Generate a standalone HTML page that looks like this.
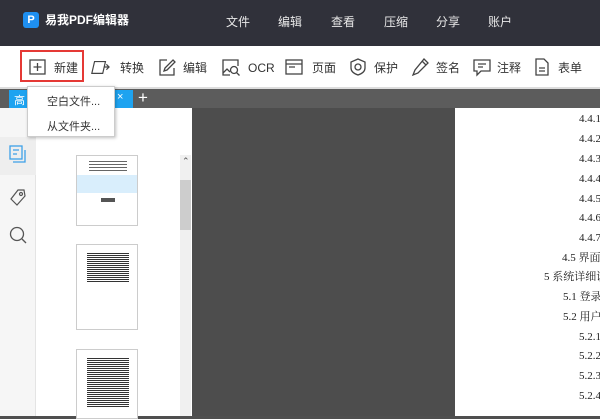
<!DOCTYPE html>
<html><head><meta charset="utf-8"><style>
*{margin:0;padding:0;box-sizing:border-box}
body{width:600px;height:416px;overflow:hidden;position:relative;background:#4f4f4f;font-family:"Liberation Sans","Noto Sans CJK SC",sans-serif}
.a{position:absolute}
.top{left:0;top:0;width:600px;height:46px;background:#30313a;color:#e8e8e8;font-size:12px}
.tb{left:0;top:46px;width:600px;height:43px;background:#fff;border-bottom:2px solid #ddd;font-size:12px;color:#333}
.tb svg{position:absolute;top:11px;width:20px;height:20px;fill:none;stroke:#444;stroke-width:1.3}
.tb span{position:absolute;top:13px}
.page{font-family:"Liberation Serif","Noto Serif CJK SC",serif;font-size:11px;color:#222;overflow:hidden}
.page div{white-space:nowrap;line-height:14px}
</style></head><body>
<div class="a top">
 <div class="a" style="left:23px;top:12px;width:16px;height:16px;background:#1e8ff0;border-radius:3px;color:#fff;font-size:11px;font-weight:bold;text-align:center;line-height:16px">P</div>
 <div class="a" style="left:45px;top:11px;font-size:12px;font-weight:bold;color:#fff">易我PDF编辑器</div>
 <div class="a" style="left:226px;top:13px">文件</div>
 <div class="a" style="left:278px;top:13px">编辑</div>
 <div class="a" style="left:331px;top:13px">查看</div>
 <div class="a" style="left:384px;top:13px">压缩</div>
 <div class="a" style="left:436px;top:13px">分享</div>
 <div class="a" style="left:488px;top:13px">账户</div>
</div>
<div class="a tb">
 <div class="a" style="left:20px;top:4px;width:64px;height:32px;border:2px solid #e53935"></div>
 <svg style="left:28px" viewBox="0 0 20 20"><rect x="2" y="3" width="15" height="14"/><path d="M9.5 6v8M5.5 10h8"/></svg><span style="left:54px">新建</span>
 <svg style="left:90px" viewBox="0 0 22 20"><path d="M5 4h12l-3 13H2zM15 10h6M18 7l3 3-3 3"/></svg><span style="left:120px">转换</span>
 <svg style="left:157px" viewBox="0 0 20 20"><path d="M10 3H3v15h14v-7M16 3l2 2-8 8-3 1 1-3z"/></svg><span style="left:183px">编辑</span>
 <svg style="left:221px" viewBox="0 0 20 20"><path d="M9 18H2V3h15v6"/><circle cx="13" cy="13" r="3.5"/><path d="M15.5 15.5l3 3M2 16l4-4 3 3"/></svg><span style="left:248px;top:15px">OCR</span>
 <svg style="left:284px" viewBox="0 0 20 20"><rect x="2" y="3" width="16" height="14"/><path d="M2 7h16M5 10h6"/></svg><span style="left:312px">页面</span>
 <svg style="left:348px" viewBox="0 0 20 20"><path d="M10 2l7 3v6c0 4-4 6-7 7-3-1-7-3-7-7V5z"/><circle cx="10" cy="10" r="3"/></svg><span style="left:374px">保护</span>
 <svg style="left:410px" viewBox="0 0 20 20"><path d="M14 2l4 4-10 10-5 2 2-5zM12 4l4 4"/></svg><span style="left:436px">签名</span>
 <svg style="left:472px" viewBox="0 0 20 20"><path d="M2 3h16v11H9l-4 4v-4H2zM6 7h8M6 10h5"/></svg><span style="left:497px">注释</span>
 <svg style="left:532px" viewBox="0 0 20 20"><path d="M4 2h8l4 4v12H4zM7 11h6M7 14h6"/></svg><span style="left:558px">表单</span>
</div>
<div class="a" style="left:0;top:89px;width:600px;height:19px;background:#5c5c5c"></div>
<div class="a" style="left:9px;top:90px;width:124px;height:18px;background:#1ea3f0;color:#fff;font-size:11px;padding:2px 0 0 5px">高<span style="position:absolute;left:108px;top:1px">×</span></div>
<div class="a" style="left:138px;top:88px;color:#fff;font-size:17px">+</div>
<div class="a" style="left:0;top:108px;width:36px;height:308px;background:#f6f6f6;border-right:1px solid #e4e4e4"></div>
<div class="a" style="left:0;top:137px;width:36px;height:38px;background:#eee"></div>
<svg class="a" style="left:9px;top:145px" width="18" height="20" viewBox="0 0 18 20" fill="none" stroke="#3da0e8" stroke-width="1.3"><rect x="1" y="1" width="12" height="13"/><path d="M4 17h12V5M4 5h6M4 9h4"/></svg>
<svg class="a" style="left:8px;top:187px" width="20" height="20" viewBox="0 0 20 20" fill="none" stroke="#555" stroke-width="1.2"><path d="M10 3l6 0 1 6-8 9-6-6z"/><circle cx="13" cy="7" r="1.5"/></svg>
<svg class="a" style="left:9px;top:226px" width="18" height="19" viewBox="0 0 18 19" fill="none" stroke="#555" stroke-width="1.3"><circle cx="8" cy="8" r="6.5"/><path d="M13 13l4 4"/></svg>
<div class="a" style="left:36px;top:108px;width:156px;height:308px;background:#fff"></div>
<div class="a" style="left:180px;top:155px;width:11px;height:261px;background:#f0f0f0"></div>
<div class="a" style="left:180px;top:180px;width:11px;height:50px;background:#cdcdcd"></div>
<div class="a" style="left:182px;top:156px;font-size:9px;color:#555">⌃</div>
<div class="a" style="left:76px;top:155px;width:62px;height:71px;border:1px solid #ccc;background:#fff">
 <div class="a" style="left:12px;top:5px;width:38px;height:12px;background:repeating-linear-gradient(#666 0 1px,#fff 1px 3px)"></div>
 <div class="a" style="left:0;top:19px;width:60px;height:18px;background:#d9eefc"></div>
 <div class="a" style="left:24px;top:42px;width:14px;height:4px;background:#555"></div></div>
<div class="a" style="left:76px;top:244px;width:62px;height:86px;border:1px solid #ccc;background:#fff">
 <div class="a" style="left:10px;top:8px;width:42px;height:30px;background:repeating-linear-gradient(#333 0 1px,#fff 1px 2px)"></div></div>
<div class="a" style="left:76px;top:349px;width:62px;height:70px;border:1px solid #ccc;background:#fff">
 <div class="a" style="left:10px;top:8px;width:42px;height:50px;background:repeating-linear-gradient(#333 0 1px,#fff 1px 2px)"></div></div>
<div class="a" style="left:27px;top:86px;width:88px;height:51px;background:#fff;border:1px solid #ccc;box-shadow:1px 1px 3px rgba(0,0,0,.25);font-size:11px;color:#333">
 <div class="a" style="left:19px;top:6px">空白文件...</div>
 <div class="a" style="left:19px;top:31px">从文件夹...</div></div>
<div class="a" style="left:192px;top:108px;width:263px;height:308px;background:#4d4d4d"></div>
<div class="a page" style="left:455px;top:108px;width:145px;height:308px;background:#fff">
 <div class="a" style="left:124px;top:4px">4.4.1</div>
 <div class="a" style="left:124px;top:24px">4.4.2</div>
 <div class="a" style="left:124px;top:44px">4.4.3</div>
 <div class="a" style="left:124px;top:64px">4.4.4</div>
 <div class="a" style="left:124px;top:84px">4.4.5</div>
 <div class="a" style="left:124px;top:103px">4.4.6</div>
 <div class="a" style="left:124px;top:123px">4.4.7</div>
 <div class="a" style="left:107px;top:143px">4.5 界面</div>
 <div class="a" style="left:89px;top:162px">5 系统详细设</div>
 <div class="a" style="left:108px;top:182px">5.1 登录</div>
 <div class="a" style="left:108px;top:202px">5.2 用户</div>
 <div class="a" style="left:124px;top:222px">5.2.1</div>
 <div class="a" style="left:124px;top:241px">5.2.2</div>
 <div class="a" style="left:124px;top:261px">5.2.3</div>
 <div class="a" style="left:124px;top:281px">5.2.4</div>
</div>
</body></html>
